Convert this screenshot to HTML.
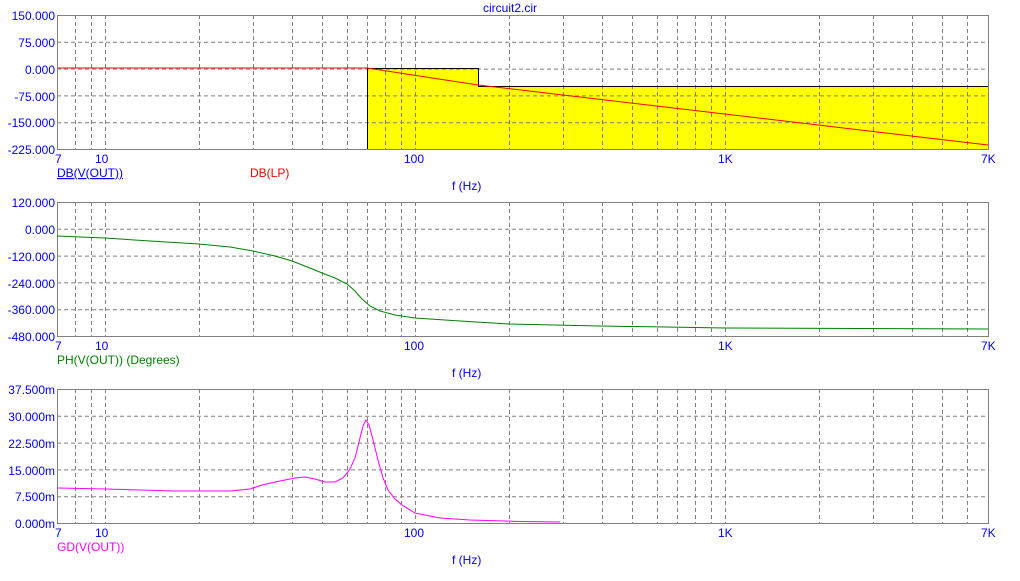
<!DOCTYPE html>
<html><head><meta charset="utf-8"><style>
body{margin:0;background:#fff;width:1020px;height:576px;overflow:hidden;font-family:"Liberation Sans",Arial,sans-serif}
svg text{font-family:"Liberation Sans",Arial,sans-serif;font-size:12px}
</style></head><body>
<svg width="1020" height="576" xmlns="http://www.w3.org/2000/svg">
<defs>
<g id="vg" stroke="#808080" stroke-dasharray="4,3" stroke-width="1">
<path d="M75.5 0V134M91.5 0V134M105.5 0V134M199.5 0V134M253.5 0V134M292.5 0V134M322.5 0V134M347.5 0V134M367.5 0V134M385.5 0V134M401.5 0V134M415.5 0V134M509.5 0V134M563.5 0V134M602.5 0V134M632.5 0V134M657.5 0V134M677.5 0V134M695.5 0V134M711.5 0V134M725.5 0V134M819.5 0V134M873.5 0V134M912.5 0V134M942.5 0V134M967.5 0V134"/>
<path d="M57 27.3H988M57 54.1H988M57 80.9H988M57 107.7H988"/>
</g>
<g id="ticks" fill="#0000ff">
<text x="55" y="14">7</text><text x="95" y="14">10</text><text x="404" y="14">100</text><text x="718" y="14">1K</text><text x="981" y="14">7K</text>
</g>
</defs>
<text x="510" y="12" fill="#0000ff" text-anchor="middle">circuit2.cir</text>
<g transform="translate(0,15)">
<path d="M367 53H478V71H988V134H367Z" fill="#ffff00"/>
<use href="#vg"/>
<path d="M367.5 53V134M367 53.5H478.5V71.5H988" stroke="#000" fill="none"/>
<path d="M57 53H367L478 70L988 130" stroke="#ff0000" fill="none"/>
<rect x="57.5" y="0.5" width="931" height="134" fill="none" stroke="#808080"/>
</g>
<g fill="#0000ff" text-anchor="end">
<text x="55" y="20">150.000</text><text x="55" y="47">75.000</text><text x="55" y="74">0.000</text><text x="55" y="101">-75.000</text><text x="55" y="127">-150.000</text><text x="55" y="154">-225.000</text>
</g>
<use href="#ticks" y="149"/>
<text x="57" y="177" fill="#0000ff" text-decoration="underline">DB(V(OUT))</text>
<text x="250" y="177" fill="#ff0000">DB(LP)</text>
<text x="452" y="190" fill="#0000ff">f (Hz)</text>
<g transform="translate(0,202)">
<use href="#vg"/>
<rect x="57.5" y="0.5" width="931" height="134" fill="none" stroke="#808080"/>
</g>
<polyline fill="none" stroke="#008000" points="57,236 105,238 150,241 199,244 230,247 253,251 275,256 292,261 310,268 322,273 335,278 347,284 355,291 362,299 370,306 380,311 395,315 415,318 460,321 509,324 600,326 725,328 988,329"/>
<g fill="#0000ff" text-anchor="end">
<text x="55" y="207">120.000</text><text x="55" y="234">0.000</text><text x="55" y="261">-120.000</text><text x="55" y="288">-240.000</text><text x="55" y="314">-360.000</text><text x="55" y="341">-480.000</text>
</g>
<use href="#ticks" y="336"/>
<text x="57" y="364" fill="#008000">PH(V(OUT)) (Degrees)</text>
<text x="452" y="377" fill="#0000ff">f (Hz)</text>
<g transform="translate(0,389)">
<use href="#vg"/>
<rect x="57.5" y="0.5" width="931" height="134" fill="none" stroke="#808080"/>
</g>
<polyline fill="none" stroke="#ff00ff" points="58,488 105,489 140,490 175,491 230,491 250,489 262,485 280,481 295,478 305,477 315,479 325,482 335,482 343,478 350,469 355,458 359,442 363,426 366,420 369,425 373,440 378,460 383,478 388,490 395,499 402,505 415,513 440,518 470,520 520,521.5 560,522"/>
<g fill="#0000ff" text-anchor="end">
<text x="55" y="394">37.500m</text><text x="55" y="421">30.000m</text><text x="55" y="448">22.500m</text><text x="55" y="475">15.000m</text><text x="55" y="501">7.500m</text><text x="55" y="528">0.000m</text>
</g>
<use href="#ticks" y="523"/>
<text x="57" y="551" fill="#ff00ff">GD(V(OUT))</text>
<text x="452" y="564" fill="#0000ff">f (Hz)</text>
</svg>
</body></html>
